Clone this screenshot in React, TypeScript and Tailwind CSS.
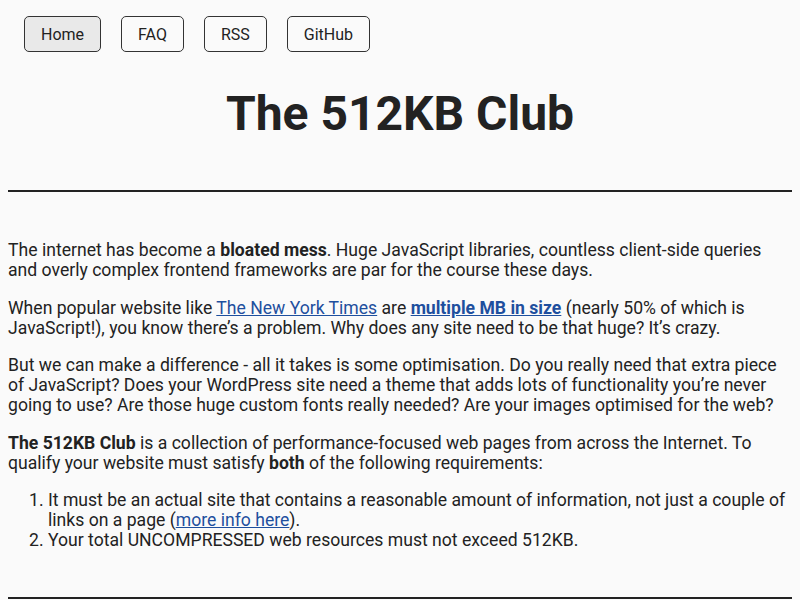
import React from "react";

export default function App() {
  const navItems = ["Home", "FAQ", "RSS", "GitHub"];
  return (
    <div className="min-h-screen bg-[#fafafa] text-[#222222] px-2 font-['Roboto',_'Liberation_Sans',_sans-serif]">
      <nav className="flex gap-5 pt-4 pl-4">
        {navItems.map((n, i) => (
          <a
            key={n}
            href="#"
            className={
              "h-9 px-4 pt-px flex items-center border border-[#333333] rounded-[5px] text-[16px] text-[#222222] " +
              (i === 0 ? "bg-[#e9e9e9]" : "bg-[#fafafa]")
            }
          >
            {n}
          </a>
        ))}
      </nav>
      <h1 className="text-center text-[48px] leading-[48px] font-bold mt-[38px] mb-[52px]">
        The 512KB Club
      </h1>
      <hr className="border-0 border-t-2 border-[#222222]" />
      <main className="text-[17.6px] leading-[20px] pt-[48px]">
        <p className="mb-[17.6px]">
          The internet has become a <strong>bloated mess</strong>. Huge JavaScript libraries, countless client-side queries and overly complex frontend frameworks are par for the course these days.
        </p>
        <p className="mb-[17.6px]">
          When popular website like{" "}
          <a href="#" className="text-[#1e4f9e] underline">The New York Times</a> are{" "}
          <a href="#" className="text-[#1e4f9e] underline font-bold">multiple MB in size</a> (nearly 50% of which is JavaScript!), you know there’s a problem. Why does any site need to be that huge? It’s crazy.
        </p>
        <p className="mb-[17.6px]">
          But we can make a difference - all it takes is some optimisation. Do you really need that extra piece of JavaScript? Does your WordPress site need a theme that adds lots of functionality you’re never going to use? Are those huge custom fonts really needed? Are your images optimised for the web?
        </p>
        <p className="mb-[17.6px]">
          <strong>The 512KB Club</strong> is a collection of performance-focused web pages from across the Internet. To qualify your website must satisfy <strong>both</strong> of the following requirements:
        </p>
        <ol className="list-decimal pl-10 mb-[47px]">
          <li>
            It must be an actual site that contains a reasonable amount of information, not just a couple of links on a page (<a href="#" className="text-[#1e4f9e] underline">more info here</a>).
          </li>
          <li>Your total UNCOMPRESSED web resources must not exceed 512KB.</li>
        </ol>
        <hr className="border-0 border-t-2 border-[#222222]" />
      </main>
    </div>
  );
}
